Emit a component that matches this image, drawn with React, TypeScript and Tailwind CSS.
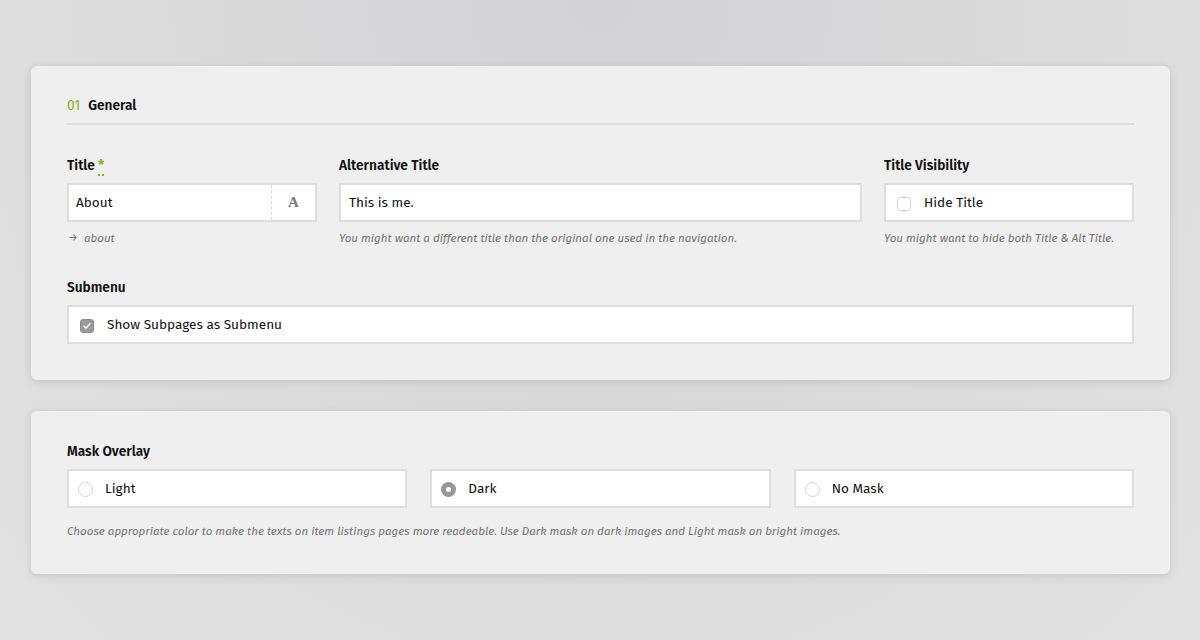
import type React from "react"

const font = { fontFamily: '"Fira Sans", "Open Sans", "Noto Sans", sans-serif' }

const Label = ({ children }: { children: React.ReactNode }) => (
  <div className="text-[13.7px] leading-5 font-semibold text-[#111] mb-[7px]">{children}</div>
)

const Hint = ({ children }: { children: React.ReactNode }) => (
  <div className="mt-2 text-[11.6px] leading-4 italic text-[#747474]">{children}</div>
)

const Checkbox = ({ checked }: { checked?: boolean }) =>
  checked ? (
    <span className="w-[14px] h-[14px] rounded-[3px] bg-[#9a9a9a] border border-[#8c8c8c] flex items-center justify-center">
      <svg width="10" height="10" viewBox="0 0 10 10" fill="none">
        <path d="M2 5.2l2 2 4-4.6" stroke="#fff" strokeWidth="1.4" strokeLinecap="round" strokeLinejoin="round" />
      </svg>
    </span>
  ) : (
    <span className="w-[14px] h-[14px] rounded-[3px] bg-white border border-[#d4d4d4]" />
  )

const Radio = ({ checked }: { checked?: boolean }) =>
  checked ? (
    <span className="w-[15px] h-[15px] rounded-full bg-[#979797] flex items-center justify-center">
      <span className="w-[5px] h-[5px] rounded-full bg-white" />
    </span>
  ) : (
    <span className="w-[15px] h-[15px] rounded-full bg-white border border-[#d4d4d4]" />
  )

const Box = ({ children, className = "" }: { children: React.ReactNode; className?: string }) => (
  <div className={`h-[39px] bg-white border-2 border-[#dedede] flex items-center text-[13.6px] text-[#111] pt-[2px] ${className}`}>
    {children}
  </div>
)

export default function App() {
  return (
    <div
      className="min-h-[640px] w-full bg-[radial-gradient(ellipse_at_top,#d3d3d5_0%,#dcdcdd_60%,#e2e2e3_100%)] pt-[66px] px-[31px]"
      style={font}
    >
      {/* General */}
      <div className="w-[1139px] bg-[#efefef] rounded-[6px] shadow-[0_2px_10px_rgba(0,0,0,0.12)] px-9 pt-[30px] pb-[36px]">
        <div className="flex items-center gap-2 text-[13.7px] leading-5 font-semibold pb-[7px] border-b-2 border-[#dcdcdc]">
          <span className="text-[#7fb21d] font-normal">01</span>
          <span className="text-[#111]">General</span>
        </div>

        <div className="flex gap-[22px] mt-[31px]">
          <div className="w-[250px]">
            <Label>
              Title{" "}
              <span className="text-[#7fb21d] border-b-2 border-dotted border-[#7fb21d] leading-none">*</span>
            </Label>
            <Box>
              <span className="flex-1 pl-[7px]">About</span>
              <span className="w-[44px] -mt-[2px] h-[35px] border-l border-dashed border-[#d8d8d8] flex items-center justify-center text-[#777] text-[15px] font-semibold" style={{ fontFamily: '"Liberation Serif", serif' }}>
                A
              </span>
            </Box>
            <div className="mt-2 text-[11.6px] leading-4 italic text-[#747474] flex items-center gap-[6px] pl-[1px]">
              <span className="not-italic text-[11px]">→</span>
              <span>about</span>
            </div>
          </div>

          <div className="flex-1">
            <Label>Alternative Title</Label>
            <Box>
              <span className="pl-[8px]">This is me.</span>
            </Box>
            <Hint>You might want a different title than the original one used in the navigation.</Hint>
          </div>

          <div className="w-[250px]">
            <Label>Title Visibility</Label>
            <Box className="pl-[11px] gap-[13px]">
              <Checkbox />
              <span>Hide Title</span>
            </Box>
            <Hint>You might want to hide both Title &amp; Alt Title.</Hint>
          </div>
        </div>

        <div className="mt-[32px]">
          <Label>Submenu</Label>
          <Box className="pl-[11px] gap-[13px]">
            <Checkbox checked />
            <span>Show Subpages as Submenu</span>
          </Box>
        </div>
      </div>

      {/* Mask Overlay */}
      <div className="w-[1139px] mt-[31px] bg-[#efefef] rounded-[6px] shadow-[0_2px_10px_rgba(0,0,0,0.12)] px-9 pt-[31px] pb-[35px]">
        <Label>Mask Overlay</Label>
        <div className="grid grid-cols-3 gap-[23px]">
          <Box className="pl-[9px] gap-[12px]">
            <Radio />
            <span>Light</span>
          </Box>
          <Box className="pl-[9px] gap-[12px]">
            <Radio checked />
            <span>Dark</span>
          </Box>
          <Box className="pl-[9px] gap-[12px]">
            <Radio />
            <span>No Mask</span>
          </Box>
        </div>
        <div className="mt-[15px] text-[11.6px] leading-4 italic text-[#747474]">
          Choose appropriate color to make the texts on item listings pages more readeable. Use Dark mask on dark images and Light mask on bright images.
        </div>
      </div>
    </div>
  )
}
